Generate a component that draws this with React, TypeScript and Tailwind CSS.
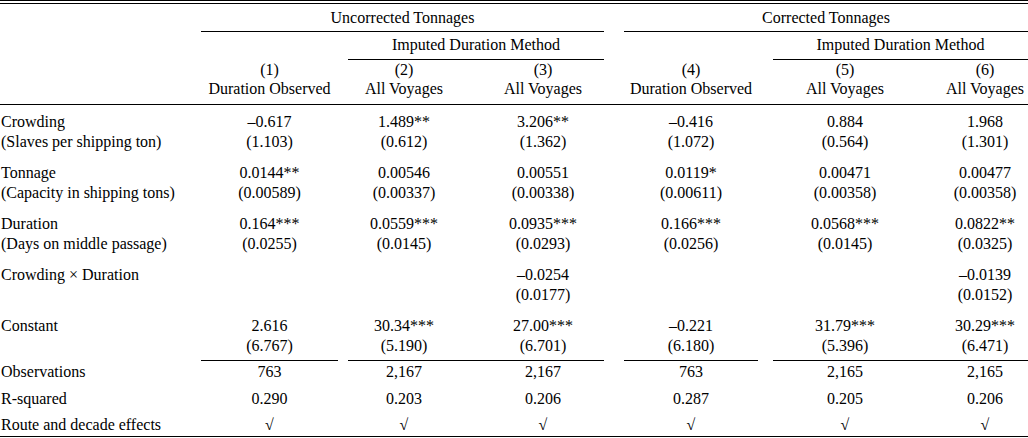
import React from 'react';

const GRID = 'grid grid-cols-[201px_137px_10px_112px_22px_122px_20px_134px_15px_144px_25px_86px]';
const COLS = ['col-start-2', 'col-start-4', 'col-start-6', 'col-start-8', 'col-start-10', 'col-start-12'];

type Pair = { label: string; sub?: string; est: string[]; se: string[]; gap: string };

const PAIRS: Pair[] = [
  {
    label: 'Crowding',
    sub: '(Slaves per shipping ton)',
    est: ['–0.617', '1.489**', '3.206**', '–0.416', '0.884', '1.968'],
    se: ['(1.103)', '(0.612)', '(1.362)', '(1.072)', '(0.564)', '(1.301)'],
    gap: 'mt-[7px]',
  },
  {
    label: 'Tonnage',
    sub: '(Capacity in shipping tons)',
    est: ['0.0144**', '0.00546', '0.00551', '0.0119*', '0.00471', '0.00477'],
    se: ['(0.00589)', '(0.00337)', '(0.00338)', '(0.00611)', '(0.00358)', '(0.00358)'],
    gap: 'mt-[11px]',
  },
  {
    label: 'Duration',
    sub: '(Days on middle passage)',
    est: ['0.164***', '0.0559***', '0.0935***', '0.166***', '0.0568***', '0.0822**'],
    se: ['(0.0255)', '(0.0145)', '(0.0293)', '(0.0256)', '(0.0145)', '(0.0325)'],
    gap: 'mt-[11px]',
  },
  {
    label: 'Crowding × Duration',
    est: ['', '', '–0.0254', '', '', '–0.0139'],
    se: ['', '', '(0.0177)', '', '', '(0.0152)'],
    gap: 'mt-[11px]',
  },
  {
    label: 'Constant',
    est: ['2.616', '30.34***', '27.00***', '–0.221', '31.79***', '30.29***'],
    se: ['(6.767)', '(5.190)', '(6.701)', '(6.180)', '(5.396)', '(6.471)'],
    gap: 'mt-[11px]',
  },
];

const STATS = [
  { label: 'Observations', vals: ['763', '2,167', '2,167', '763', '2,165', '2,165'], gap: 'mt-[1px]' },
  { label: 'R-squared', vals: ['0.290', '0.203', '0.206', '0.287', '0.205', '0.206'], gap: 'mt-[7px]' },
  { label: 'Route and decade effects', vals: ['√', '√', '√', '√', '√', '√'], gap: 'mt-[6px]' },
];

const HEADS = [
  ['(1)', 'Duration Observed'],
  ['(2)', 'All Voyages'],
  ['(3)', 'All Voyages'],
  ['(4)', 'Duration Observed'],
  ['(5)', 'All Voyages'],
  ['(6)', 'All Voyages'],
];

export default function App() {
  return (
    <div className="w-[1028px] bg-white text-black text-[16px] leading-[20px] font-['Liberation_Serif',serif] whitespace-nowrap">
      {/* top double rule */}
      <div className="h-[4px] border-y border-black" />

      {/* spanning groups */}
      <div className={`${GRID} pt-[4px]`}>
        <div className="col-start-2 col-span-5 text-center pb-[3px] border-b border-black">Uncorrected Tonnages</div>
        <div className="col-start-8 col-span-5 text-center pb-[3px] border-b border-black">Corrected Tonnages</div>
      </div>
      <div className={`${GRID} pt-[3px]`}>
        <div className="col-start-4 col-span-3 text-center pb-[4px] border-b border-black">Imputed Duration Method</div>
        <div className="col-start-10 col-span-3 text-center pb-[4px] border-b border-black">Imputed Duration Method</div>
      </div>
      <div className={`${GRID} pb-[6px] border-b border-black leading-[19px]`}>
        {HEADS.map((h, i) => (
          <div key={i} className={`${COLS[i]} row-start-1 text-center`}>
            <div>{h[0]}</div>
            <div>{h[1]}</div>
          </div>
        ))}
      </div>

      {/* coefficients */}
      <div className="pb-[4px]">
        {PAIRS.map((p) => (
          <div key={p.label} className={`${GRID} ${p.gap}`}>
            <div className="col-start-1 row-start-1 pl-[1px]">
              <div>{p.label}</div>
              <div>{p.sub ?? '\u00a0'}</div>
            </div>
            {p.est.map((v, i) => (
              <div key={i} className={`${COLS[i]} row-start-1 text-center`}>
                <div>{v || '\u00a0'}</div>
                <div>{p.se[i] || '\u00a0'}</div>
              </div>
            ))}
          </div>
        ))}
      </div>

      {/* segmented rule */}
      <div className={`${GRID} h-px`}>
        <div className="col-start-2 bg-black" />
        <div className="col-start-4 col-span-3 bg-black" />
        <div className="col-start-8 bg-black" />
        <div className="col-start-10 col-span-3 bg-black" />
      </div>

      {/* statistics */}
      <div className="pb-[1px] border-b border-black">
        {STATS.map((s) => (
          <div key={s.label} className={`${GRID} ${s.gap}`}>
            <div className="col-start-1 row-start-1 pl-[1px]">{s.label}</div>
            {s.vals.map((v, i) => (
              <div key={i} className={`${COLS[i]} row-start-1 text-center`}>{v}</div>
            ))}
          </div>
        ))}
      </div>
    </div>
  );
}
